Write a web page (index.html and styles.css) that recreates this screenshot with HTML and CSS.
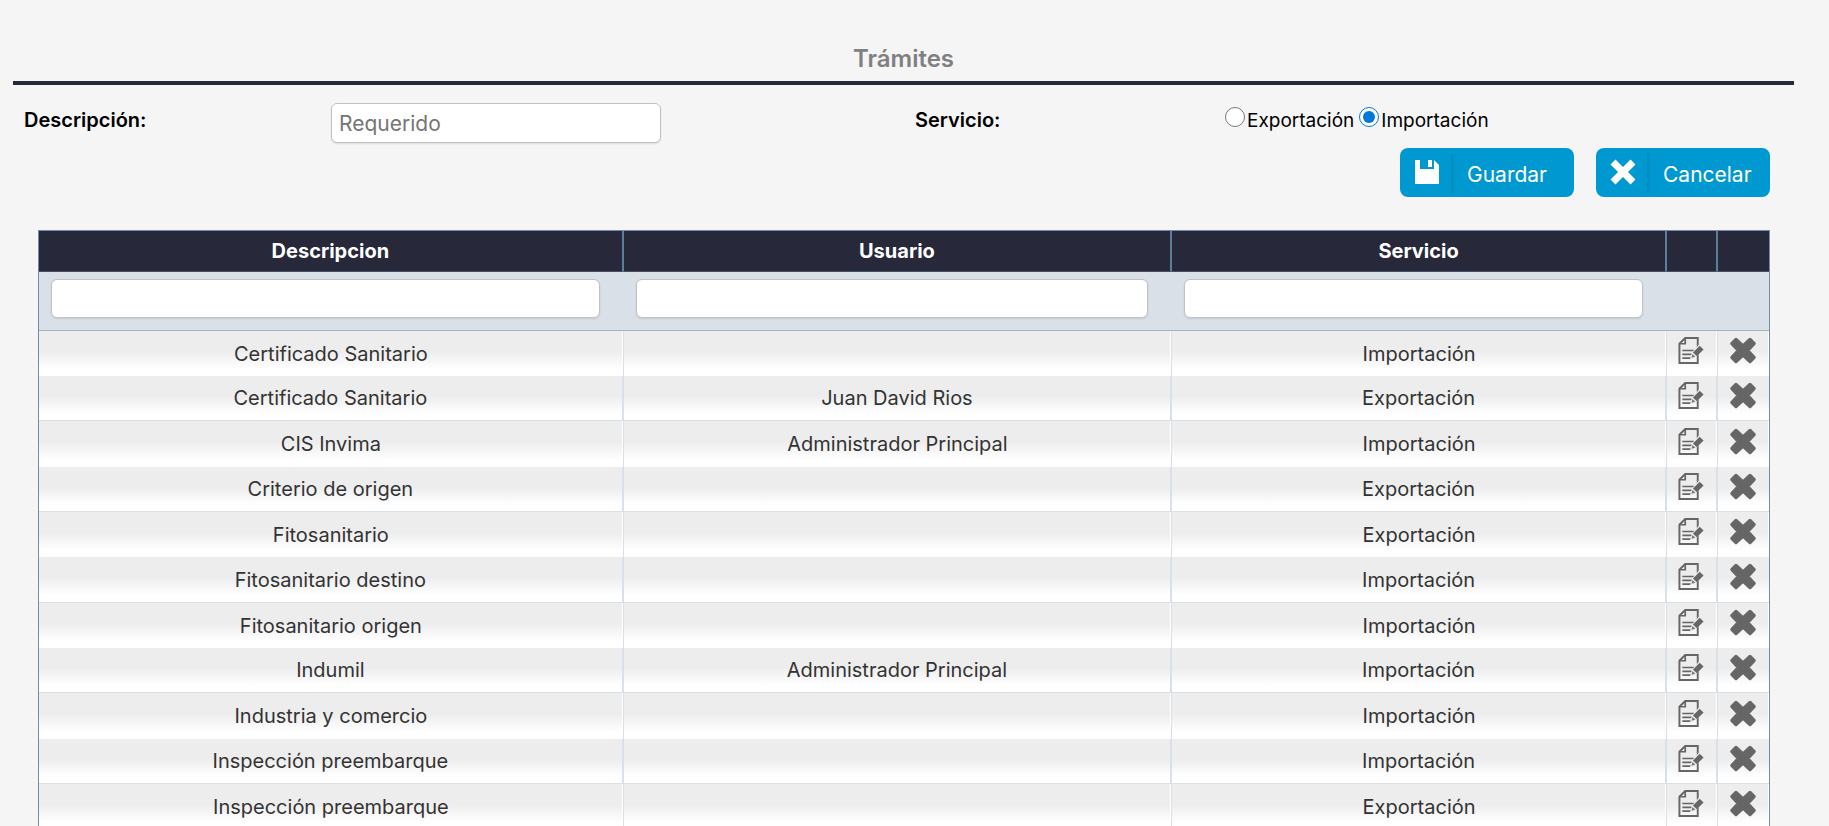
FILE: index.html
```
<!DOCTYPE html>
<html lang="es">
<head>
  <meta charset="UTF-8">
  <meta name="viewport" content="width=device-width, initial-scale=1.0">
  <title>Trámites</title>
  <link rel="stylesheet" href="styles.css">
</head>
<body>
  <!-- Shared icons -->
  <svg class="sprite" aria-hidden="true">
    <symbol id="icon-edit" viewBox="0 0 26 28">
      <path d="M7 1H20V27H1V7Z" fill="none" stroke="#666" stroke-width="2"/>
      <path d="M7 1V7H1" fill="none" stroke="#666" stroke-width="1.8"/>
      <path d="M4 14H16M4 18H14M4 22H13" stroke="#666" stroke-width="1.8"/>
      <path d="M22 7L27 12L17 22L12 23L14 16Z" fill="#eee"/>
      <path d="M22 9L26 13L19 20L15 16Z" fill="#666"/>
      <path d="M14.500 17.500L17.500 20.500L13.500 21.500Z" fill="#777"/>
    </symbol>
    <symbol id="icon-delete" viewBox="0 0 26 27">
      <path d="M6 2.500L13 9L20 2.500L24 6.500L17.500 13.500L24 20.500L20 24.500L13 18L6 24.500L2 20.500L8.500 13.500L2 6.500Z" fill="#666" stroke="#666" stroke-width="3.400" stroke-linejoin="round"/>
    </symbol>
  </svg>

  <h1 class="title">Trámites</h1>

  <form>
    <div class="fields">
      <label class="field-label" for="descripcion">Descripción:</label>
      <input type="text" id="descripcion" name="descripcion" class="text-input" placeholder="Requerido">
      <span class="field-label" id="servicioLabel">Servicio:</span>
      <div class="radios" role="radiogroup" aria-labelledby="servicioLabel">
        <input type="radio" id="exportacion" name="servicio" value="exportacion"><label for="exportacion">Exportación</label>
        <input type="radio" id="importacion" name="servicio" value="importacion" checked><label for="importacion">Importación</label>
      </div>
    </div>

    <div class="actions">
      <button type="submit" class="btn">
        <svg class="btn-icon" viewBox="0 0 26 26" aria-hidden="true">
          <path d="M1 1H6V10H20V1L25 6V25H1Z" fill="#fff"/>
          <path d="M14 1H18V8H14Z" fill="#fff"/>
        </svg>
        <span class="btn-text">Guardar</span>
      </button>
      <button type="button" class="btn">
        <svg class="btn-icon" viewBox="0 0 26 26" aria-hidden="true">
          <path d="M3 3L23 23M23 3L3 23" stroke="#fff" stroke-width="7"/>
        </svg>
        <span class="btn-text">Cancelar</span>
      </button>
    </div>
  </form>

  <table class="grid">
    <colgroup>
      <col class="col-descripcion">
      <col class="col-usuario">
      <col>
      <col class="col-icon">
      <col class="col-icon">
    </colgroup>
    <thead>
      <tr>
        <th>Descripcion</th>
        <th>Usuario</th>
        <th>Servicio</th>
        <th></th>
        <th></th>
      </tr>
      <tr class="filters">
        <td><input type="text" class="text-input" aria-label="Filtrar descripcion"></td>
        <td><input type="text" class="text-input" aria-label="Filtrar usuario"></td>
        <td><input type="text" class="text-input" aria-label="Filtrar servicio"></td>
        <td></td>
        <td></td>
      </tr>
    </thead>
    <tbody id="rows"></tbody>
  </table>

  <script>
    const tramites = [
      ['Certificado Sanitario', '', 'Importación'],
      ['Certificado Sanitario', 'Juan David Rios', 'Exportación'],
      ['CIS Invima', 'Administrador Principal', 'Importación'],
      ['Criterio de origen', '', 'Exportación'],
      ['Fitosanitario', '', 'Exportación'],
      ['Fitosanitario destino', '', 'Importación'],
      ['Fitosanitario origen', '', 'Importación'],
      ['Indumil', 'Administrador Principal', 'Importación'],
      ['Industria y comercio', '', 'Importación'],
      ['Inspección preembarque', '', 'Importación'],
      ['Inspección preembarque', '', 'Exportación']
    ];

    const iconCell = (icon, label) =>
      `<td class="icon-cell"><button type="button" class="icon-btn" aria-label="${label}"><svg><use href="#${icon}"/></svg></button></td>`;

    document.getElementById('rows').innerHTML = tramites.map(t =>
      '<tr>' + t.map(text => `<td>${text}</td>`).join('') +
      iconCell('icon-edit', 'Editar') + iconCell('icon-delete', 'Eliminar') + '</tr>'
    ).join('');
  </script>
</body>
</html>
```
FILE: styles.css
```
* {
  box-sizing: border-box;
}
html {
  overflow: hidden;
}
body {
  margin: 0;
  padding: 45px 35px 0 13px;
  background-color: #f5f5f5;
  color: #000;
  font-family: Inter, sans-serif;
  font-size: 20px;
  line-height: 24px;
}
.sprite {
  display: none;
}
.title {
  margin: 0;
  padding-bottom: 8px;
  border-bottom: 4px solid #27283a;
  color: #808080;
  font-size: 24px;
  font-weight: 600;
  line-height: 28px;
  text-align: center;
}
.fields {
  display: grid;
  grid-template-columns: 307fr 584fr 310fr 569fr;
  padding: 18px 0 0 11px;
}
.field-label {
  padding-top: 5px;
  font-weight: 600;
}
.text-input {
  width: 330px;
  height: 40px;
  padding: 0 7px;
  border: 1px solid #c2c2c2;
  border-radius: 6px;
  background-color: #fff;
  box-shadow: 0 1px 2px rgba(0, 0, 0, 0.1);
  font-family: inherit;
  font-size: 21px;
}
.text-input::placeholder {
  color: #757575;
}
.radios {
  display: flex;
  align-items: flex-start;
  padding-top: 4px;
  font-size: 19px;
}
.radios label {
  padding: 2px 5px 0 2px;
}
.radios input {
  width: 20px;
  height: 20px;
  margin: 0;
  accent-color: #0078d7;
}
.actions {
  display: flex;
  justify-content: flex-end;
  gap: 22px;
  padding: 5px 24px 0 0;
}
.btn {
  display: flex;
  align-items: center;
  width: 174px;
  height: 49px;
  padding: 0 0 0 14px;
  border: none;
  border-radius: 8px;
  background-color: #0098d0;
  color: #fff;
  font-family: inherit;
  font-size: 21px;
  cursor: pointer;
}
.btn-icon {
  width: 26px;
  height: 26px;
  margin-bottom: 2px;
}
.btn-text {
  margin-left: 11px;
  padding: 4px 0 0 16px;
  line-height: 36px;
  background: linear-gradient(90deg, #0089be, #0098d0) no-repeat 0 0 / 4px 100%;
}
.grid {
  width: calc(100% - 49px);
  margin: 33px 24px 0 25px;
  border: 1px solid #6f8cab;
  border-collapse: separate;
  border-spacing: 0;
  table-layout: fixed;
  color: #333;
  text-align: center;
}
.col-descripcion {
  width: 33.8%;
}
.col-usuario {
  width: 31.7%;
}
.col-icon {
  width: 51px;
}
.grid td,
.grid th {
  padding: 0;
}
.grid th {
  height: 41px;
  border-right: 2px solid #5c7f99;
  border-bottom: 1px solid #435068;
  background-color: #27283a;
  color: #fff;
}
.filters td {
  height: 59px;
  padding: 7px 24px 12px 12px;
  border-bottom: 1px solid #a0b4c8;
  background-color: #dae0e7;
}
.filters .text-input {
  display: block;
  width: 100%;
  height: 39px;
}
/* Odd rows split the divider into a light and a grey line */
.grid tbody td {
  height: 45px;
  border-right: 1px solid #d9e0e7;
  background: linear-gradient(#ededed 45%, #fff 85%);
  box-shadow: inset -1px 0 #fff;
}
.grid tbody tr:nth-child(3n) td {
  height: 46px;
}
.grid tbody tr:nth-child(even) td {
  border-right-width: 2px;
  border-bottom: 1px solid #d9e0e7;
  box-shadow: none;
}
.grid th:last-child,
.grid tbody tr td:last-child {
  border-right: none;
}
.grid .icon-cell {
  padding-right: 2px;
}
.icon-btn {
  display: block;
  width: 26px;
  height: 27px;
  margin: 0 auto 6px;
  padding: 0;
  border: none;
  background: none;
  cursor: pointer;
}
.icon-btn svg {
  display: block;
  width: 26px;
  height: 27px;
}
```
